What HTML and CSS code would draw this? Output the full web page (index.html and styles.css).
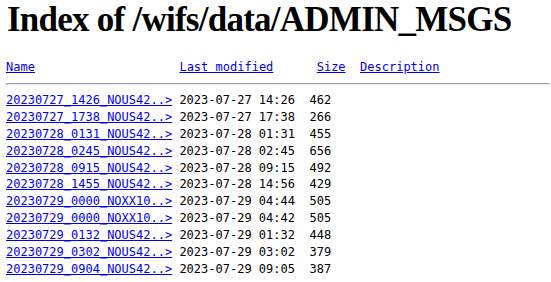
FILE: index.html
```html
<!DOCTYPE html>
<html>
<head>
<meta charset="utf-8">
<title>Index of /wifs/data/ADMIN_MSGS</title>
<link rel="stylesheet" href="styles.css">
</head>
<body>
<h1 class="title">Index of /wifs/data/ADMIN_MSGS</h1>
<pre class="listing"><a href="#">Name</a>                    <a href="#">Last modified</a>      <a href="#">Size</a>  <a href="#">Description</a><hr class="rule"><a href="#">20230727_1426_NOUS42..&gt;</a> 2023-07-27 14:26  462  
<a href="#">20230727_1738_NOUS42..&gt;</a> 2023-07-27 17:38  266  
<a href="#">20230728_0131_NOUS42..&gt;</a> 2023-07-28 01:31  455  
<a href="#">20230728_0245_NOUS42..&gt;</a> 2023-07-28 02:45  656  
<a href="#">20230728_0915_NOUS42..&gt;</a> 2023-07-28 09:15  492  
<a href="#">20230728_1455_NOUS42..&gt;</a> 2023-07-28 14:56  429  
<a href="#">20230729_0000_NOXX10..&gt;</a> 2023-07-29 04:44  505  
<a href="#">20230729_0000_NOXX10..&gt;</a> 2023-07-29 04:42  505  
<a href="#">20230729_0132_NOUS42..&gt;</a> 2023-07-29 01:32  448  
<a href="#">20230729_0302_NOUS42..&gt;</a> 2023-07-29 03:02  379  
<a href="#">20230729_0904_NOUS42..&gt;</a> 2023-07-29 09:05  387  
</pre>
</body>
</html>
```
FILE: styles.css
```css
html, body {
  background: #fff;
}
body {
  margin: 0 1px 0 6px;
  font-family: "Liberation Serif", serif;
  color: #000;
}
.title {
  font-family: "Liberation Serif", serif;
  font-size: 35px;
  line-height: 40px;
  letter-spacing: -0.75px;
  font-weight: bold;
  margin: 0 0 19px 1px;
  white-space: nowrap;
}
.listing {
  font-family: "DejaVu Sans Mono", monospace;
  font-size: 12px;
  line-height: 16.9px;
  margin: 0;
}
.listing a {
  color: #0000ee;
}
.rule {
  margin: 7px 0 7px;
}
```
